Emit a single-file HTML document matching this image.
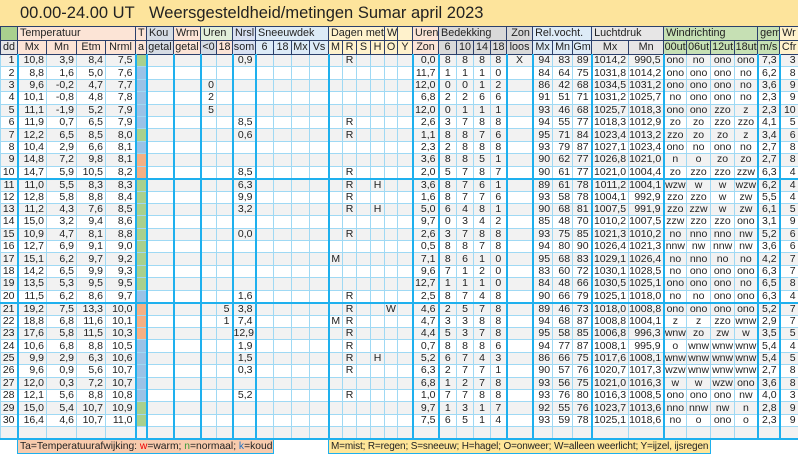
<!DOCTYPE html>
<html><head><meta charset="utf-8"><style>
body{margin:0;width:798px;height:455px;overflow:hidden;background:#fff;font-family:"Liberation Sans",Arial,sans-serif;}
.title{height:26px;background:#fde49c;position:relative;font-size:16.5px;color:#222;}
.title span{position:absolute;top:4px;}
table{border-collapse:collapse;table-layout:fixed;width:798px;font-size:10.5px;color:#222;}
td{padding:0 2px 0 0;overflow:hidden;white-space:nowrap;line-height:11px;text-align:right;border:1px solid #9fd9f4;}
thead tr{height:14px;}
thead td{border:1px solid #2b3f6b;text-align:center;padding:0;font-size:10.8px;}
thead tr.h1 td{text-align:left;padding-left:2px;}
tbody tr{height:12.4px;}
tbody tr:nth-child(odd) td{background:#f2f2f2;}
tbody td:nth-child(n+16):nth-child(-n+21),tbody td:nth-child(n+23):nth-child(-n+27),tbody td:nth-child(n+33):nth-child(-n+36){text-align:center;padding:0;}
tbody td:nth-child(1),tbody td:nth-child(5),tbody td:nth-child(6),tbody td:nth-child(7),tbody td:nth-child(8),tbody td:nth-child(10),tbody td:nth-child(11),tbody td:nth-child(15),tbody td:nth-child(21),tbody td:nth-child(22),tbody td:nth-child(26),tbody td:nth-child(27),tbody td:nth-child(30),tbody td:nth-child(32),tbody td:nth-child(36),tbody td:nth-child(37),tbody td:nth-child(38){border-right:2px solid #1eb0ee;}
tbody tr.b td{border-bottom:2px solid #1eb0ee;}
tbody tr td.g{background:#a9d08e!important}
tbody tr td.bl{background:#9bc2e6!important}
tbody tr td.o{background:#f4b084!important}
.s{background:#fce4d6}.k{background:#d6dce4}.gr{background:#e2efda}.l{background:#d9e1f2}.sb{background:#ddebf7}.y{background:#fff2cc}.gy{background:#d9d9d9}.lg{background:#e7e6e6}.wg{background:#c6e0b4}.dg{background:#a9d08e}
tr.leg{height:14px}
tr.leg td{background:#fff!important;border:none;}
tr.leg td.ls{background:#f8cbad!important;text-align:left;padding-left:2px;border:1px solid #1eb0ee;overflow:hidden;font-size:10.3px}
tr.leg td.ly{background:#ffe699!important;text-align:left;padding-left:2px;border:1px solid #1eb0ee;overflow:hidden;font-size:10px;letter-spacing:-0.15px}
</style></head><body>
<div class="title"><span style="left:20px">00.00-24.00 UT</span><span style="left:149px">Weersgesteldheid/metingen Sumar april 2023</span></div>
<table>
<colgroup><col style="width:17px"><col style="width:29px"><col style="width:30px"><col style="width:29px"><col style="width:30px"><col style="width:11px"><col style="width:27px"><col style="width:27px"><col style="width:16px"><col style="width:16px"><col style="width:23px"><col style="width:18px"><col style="width:18px"><col style="width:18px"><col style="width:19px"><col style="width:14px"><col style="width:14px"><col style="width:14px"><col style="width:14px"><col style="width:13px"><col style="width:15px"><col style="width:26px"><col style="width:18px"><col style="width:17px"><col style="width:17px"><col style="width:16px"><col style="width:26px"><col style="width:20px"><col style="width:20px"><col style="width:19px"><col style="width:37px"><col style="width:35px"><col style="width:23px"><col style="width:24px"><col style="width:24px"><col style="width:23px"><col style="width:22px"><col style="width:19px"></colgroup>
<thead>
<tr class="h1"><td class="dg"></td><td class="s" colspan="4">Temperatuur</td><td class="s">T</td><td class="k">Kou</td><td class="s">Wrm</td><td class="gr" colspan="2">Uren</td><td class="l">Nrsl</td><td class="sb" colspan="4">Sneeuwdek</td><td class="y" colspan="4">Dagen met</td><td class="y">W</td><td class="y"></td><td class="s">Uren</td><td class="gy" colspan="4">Bedekking</td><td class="gy" style="text-align:center">Zon</td><td class="sb" colspan="3">Rel.vocht.</td><td class="lg" colspan="2">Luchtdruk</td><td class="wg" colspan="4">Windrichting</td><td class="wg">gem</td><td class="y">Wr</td></tr>
<tr><td class="lg">dd</td><td class="s">Mx</td><td class="s">Mn</td><td class="s">Etm</td><td class="s">Nrml</td><td class="s">a</td><td class="k">getal</td><td class="s">getal</td><td class="k">&lt;0</td><td class="s">18</td><td class="l">som</td><td class="sb">6</td><td class="sb">18</td><td class="sb">Mx</td><td class="sb">Vs</td><td class="y">M</td><td class="y">R</td><td class="y">S</td><td class="y">H</td><td class="y">O</td><td class="y">Y</td><td class="s">Zon</td><td class="gy">6</td><td class="gy">10</td><td class="gy">14</td><td class="gy">18</td><td class="gy">loos</td><td class="sb">Mx</td><td class="sb">Mn</td><td class="sb">Gm</td><td class="lg">Mx</td><td class="lg">Mn</td><td class="wg">00ut</td><td class="wg">06ut</td><td class="wg">12ut</td><td class="wg">18ut</td><td class="wg">m/s</td><td class="y">Cfr</td></tr>
</thead>
<tbody>
<tr><td>1</td><td>10,8</td><td>3,9</td><td>8,4</td><td>7,5</td><td class="g"></td><td></td><td></td><td></td><td></td><td>0,9</td><td></td><td></td><td></td><td></td><td></td><td>R</td><td></td><td></td><td></td><td></td><td>0,0</td><td>8</td><td>8</td><td>8</td><td>8</td><td>X</td><td>94</td><td>83</td><td>89</td><td>1014,2</td><td>990,5</td><td>ono</td><td>no</td><td>ono</td><td>ono</td><td>7,3</td><td>3</td></tr>
<tr><td>2</td><td>8,8</td><td>1,6</td><td>5,0</td><td>7,6</td><td class="bl"></td><td></td><td></td><td></td><td></td><td></td><td></td><td></td><td></td><td></td><td></td><td></td><td></td><td></td><td></td><td></td><td>11,7</td><td>1</td><td>1</td><td>1</td><td>0</td><td></td><td>84</td><td>64</td><td>75</td><td>1031,8</td><td>1014,2</td><td>ono</td><td>ono</td><td>ono</td><td>no</td><td>6,2</td><td>8</td></tr>
<tr><td>3</td><td>9,6</td><td>-0,2</td><td>4,7</td><td>7,7</td><td class="bl"></td><td></td><td></td><td>0</td><td></td><td></td><td></td><td></td><td></td><td></td><td></td><td></td><td></td><td></td><td></td><td></td><td>12,0</td><td>0</td><td>0</td><td>1</td><td>2</td><td></td><td>86</td><td>42</td><td>68</td><td>1034,5</td><td>1031,2</td><td>ono</td><td>ono</td><td>ono</td><td>no</td><td>3,6</td><td>9</td></tr>
<tr><td>4</td><td>10,1</td><td>-0,8</td><td>4,8</td><td>7,8</td><td class="bl"></td><td></td><td></td><td>2</td><td></td><td></td><td></td><td></td><td></td><td></td><td></td><td></td><td></td><td></td><td></td><td></td><td>6,8</td><td>2</td><td>2</td><td>6</td><td>6</td><td></td><td>91</td><td>51</td><td>71</td><td>1031,2</td><td>1025,7</td><td>no</td><td>ono</td><td>ono</td><td>no</td><td>2,3</td><td>9</td></tr>
<tr><td>5</td><td>11,1</td><td>-1,9</td><td>5,2</td><td>7,9</td><td class="bl"></td><td></td><td></td><td>5</td><td></td><td></td><td></td><td></td><td></td><td></td><td></td><td></td><td></td><td></td><td></td><td></td><td>12,0</td><td>0</td><td>1</td><td>1</td><td>1</td><td></td><td>93</td><td>46</td><td>68</td><td>1025,7</td><td>1018,3</td><td>ono</td><td>ono</td><td>zzo</td><td>z</td><td>2,3</td><td>10</td></tr>
<tr><td>6</td><td>11,9</td><td>0,7</td><td>6,5</td><td>7,9</td><td class="bl"></td><td></td><td></td><td></td><td></td><td>8,5</td><td></td><td></td><td></td><td></td><td></td><td>R</td><td></td><td></td><td></td><td></td><td>2,6</td><td>3</td><td>7</td><td>8</td><td>8</td><td></td><td>94</td><td>55</td><td>77</td><td>1018,3</td><td>1012,9</td><td>zo</td><td>zo</td><td>zzo</td><td>zzo</td><td>4,1</td><td>5</td></tr>
<tr><td>7</td><td>12,2</td><td>6,5</td><td>8,5</td><td>8,0</td><td class="g"></td><td></td><td></td><td></td><td></td><td>0,6</td><td></td><td></td><td></td><td></td><td></td><td>R</td><td></td><td></td><td></td><td></td><td>1,1</td><td>8</td><td>8</td><td>7</td><td>6</td><td></td><td>95</td><td>71</td><td>84</td><td>1023,4</td><td>1013,2</td><td>zzo</td><td>zo</td><td>zo</td><td>z</td><td>3,4</td><td>6</td></tr>
<tr><td>8</td><td>10,4</td><td>2,9</td><td>6,6</td><td>8,1</td><td class="bl"></td><td></td><td></td><td></td><td></td><td></td><td></td><td></td><td></td><td></td><td></td><td></td><td></td><td></td><td></td><td></td><td>2,3</td><td>2</td><td>8</td><td>8</td><td>8</td><td></td><td>93</td><td>79</td><td>87</td><td>1027,1</td><td>1023,4</td><td>ono</td><td>no</td><td>ono</td><td>no</td><td>2,7</td><td>8</td></tr>
<tr><td>9</td><td>14,8</td><td>7,2</td><td>9,8</td><td>8,1</td><td class="o"></td><td></td><td></td><td></td><td></td><td></td><td></td><td></td><td></td><td></td><td></td><td></td><td></td><td></td><td></td><td></td><td>3,6</td><td>8</td><td>8</td><td>5</td><td>1</td><td></td><td>90</td><td>62</td><td>77</td><td>1026,8</td><td>1021,0</td><td>n</td><td>o</td><td>zo</td><td>zo</td><td>2,7</td><td>8</td></tr>
<tr class="b"><td>10</td><td>14,7</td><td>5,9</td><td>10,5</td><td>8,2</td><td class="o"></td><td></td><td></td><td></td><td></td><td>8,5</td><td></td><td></td><td></td><td></td><td></td><td>R</td><td></td><td></td><td></td><td></td><td>2,0</td><td>5</td><td>7</td><td>8</td><td>7</td><td></td><td>90</td><td>61</td><td>77</td><td>1021,0</td><td>1004,4</td><td>zo</td><td>zzo</td><td>zzo</td><td>zzw</td><td>6,3</td><td>4</td></tr>
<tr><td>11</td><td>11,0</td><td>5,5</td><td>8,3</td><td>8,3</td><td class="g"></td><td></td><td></td><td></td><td></td><td>6,3</td><td></td><td></td><td></td><td></td><td></td><td>R</td><td></td><td>H</td><td></td><td></td><td>3,6</td><td>8</td><td>7</td><td>6</td><td>1</td><td></td><td>89</td><td>61</td><td>78</td><td>1011,2</td><td>1004,1</td><td>wzw</td><td>w</td><td>w</td><td>wzw</td><td>6,2</td><td>4</td></tr>
<tr><td>12</td><td>12,8</td><td>5,8</td><td>8,8</td><td>8,4</td><td class="g"></td><td></td><td></td><td></td><td></td><td>9,9</td><td></td><td></td><td></td><td></td><td></td><td>R</td><td></td><td></td><td></td><td></td><td>1,6</td><td>8</td><td>7</td><td>7</td><td>6</td><td></td><td>93</td><td>58</td><td>78</td><td>1004,1</td><td>992,9</td><td>zzo</td><td>zzo</td><td>w</td><td>zw</td><td>5,5</td><td>4</td></tr>
<tr><td>13</td><td>11,2</td><td>4,3</td><td>7,6</td><td>8,5</td><td class="g"></td><td></td><td></td><td></td><td></td><td>3,2</td><td></td><td></td><td></td><td></td><td></td><td>R</td><td></td><td>H</td><td></td><td></td><td>5,0</td><td>6</td><td>4</td><td>8</td><td>1</td><td></td><td>90</td><td>68</td><td>81</td><td>1007,5</td><td>991,9</td><td>zzo</td><td>zzw</td><td>w</td><td>zw</td><td>6,1</td><td>5</td></tr>
<tr><td>14</td><td>15,0</td><td>3,2</td><td>9,4</td><td>8,6</td><td class="g"></td><td></td><td></td><td></td><td></td><td></td><td></td><td></td><td></td><td></td><td></td><td></td><td></td><td></td><td></td><td></td><td>9,7</td><td>0</td><td>3</td><td>4</td><td>2</td><td></td><td>85</td><td>48</td><td>70</td><td>1010,2</td><td>1007,5</td><td>zzw</td><td>zzo</td><td>zzo</td><td>ono</td><td>3,1</td><td>9</td></tr>
<tr><td>15</td><td>10,9</td><td>4,7</td><td>8,1</td><td>8,8</td><td class="g"></td><td></td><td></td><td></td><td></td><td>0,0</td><td></td><td></td><td></td><td></td><td></td><td>R</td><td></td><td></td><td></td><td></td><td>2,6</td><td>3</td><td>7</td><td>8</td><td>8</td><td></td><td>93</td><td>75</td><td>85</td><td>1021,3</td><td>1010,2</td><td>no</td><td>nno</td><td>nno</td><td>nw</td><td>5,2</td><td>6</td></tr>
<tr><td>16</td><td>12,7</td><td>6,9</td><td>9,1</td><td>9,0</td><td class="g"></td><td></td><td></td><td></td><td></td><td></td><td></td><td></td><td></td><td></td><td></td><td></td><td></td><td></td><td></td><td></td><td>0,5</td><td>8</td><td>8</td><td>7</td><td>8</td><td></td><td>94</td><td>80</td><td>90</td><td>1026,4</td><td>1021,3</td><td>nnw</td><td>nw</td><td>nnw</td><td>nw</td><td>3,6</td><td>6</td></tr>
<tr><td>17</td><td>15,1</td><td>6,2</td><td>9,7</td><td>9,2</td><td class="g"></td><td></td><td></td><td></td><td></td><td></td><td></td><td></td><td></td><td></td><td>M</td><td></td><td></td><td></td><td></td><td></td><td>7,1</td><td>8</td><td>6</td><td>1</td><td>0</td><td></td><td>95</td><td>68</td><td>83</td><td>1029,1</td><td>1026,4</td><td>no</td><td>nno</td><td>no</td><td>no</td><td>4,2</td><td>7</td></tr>
<tr><td>18</td><td>14,2</td><td>6,5</td><td>9,9</td><td>9,3</td><td class="g"></td><td></td><td></td><td></td><td></td><td></td><td></td><td></td><td></td><td></td><td></td><td></td><td></td><td></td><td></td><td></td><td>9,6</td><td>7</td><td>1</td><td>2</td><td>0</td><td></td><td>83</td><td>60</td><td>72</td><td>1030,1</td><td>1028,5</td><td>no</td><td>ono</td><td>ono</td><td>ono</td><td>6,3</td><td>7</td></tr>
<tr><td>19</td><td>13,5</td><td>5,3</td><td>9,5</td><td>9,5</td><td class="g"></td><td></td><td></td><td></td><td></td><td></td><td></td><td></td><td></td><td></td><td></td><td></td><td></td><td></td><td></td><td></td><td>12,7</td><td>1</td><td>1</td><td>1</td><td>0</td><td></td><td>84</td><td>48</td><td>66</td><td>1030,5</td><td>1025,1</td><td>ono</td><td>ono</td><td>ono</td><td>no</td><td>6,5</td><td>8</td></tr>
<tr class="b"><td>20</td><td>11,5</td><td>6,2</td><td>8,6</td><td>9,7</td><td class="bl"></td><td></td><td></td><td></td><td></td><td>1,6</td><td></td><td></td><td></td><td></td><td></td><td>R</td><td></td><td></td><td></td><td></td><td>2,5</td><td>8</td><td>7</td><td>4</td><td>8</td><td></td><td>90</td><td>66</td><td>79</td><td>1025,1</td><td>1018,0</td><td>no</td><td>no</td><td>ono</td><td>ono</td><td>6,3</td><td>4</td></tr>
<tr><td>21</td><td>19,2</td><td>7,5</td><td>13,3</td><td>10,0</td><td class="o"></td><td></td><td></td><td></td><td>5</td><td>3,8</td><td></td><td></td><td></td><td></td><td></td><td>R</td><td></td><td></td><td>W</td><td></td><td>4,6</td><td>2</td><td>5</td><td>7</td><td>8</td><td></td><td>89</td><td>46</td><td>73</td><td>1018,0</td><td>1008,8</td><td>ono</td><td>ono</td><td>ono</td><td>ono</td><td>5,2</td><td>7</td></tr>
<tr><td>22</td><td>18,8</td><td>6,8</td><td>11,6</td><td>10,1</td><td class="o"></td><td></td><td></td><td></td><td>1</td><td>7,4</td><td></td><td></td><td></td><td></td><td>M</td><td>R</td><td></td><td></td><td></td><td></td><td>4,7</td><td>3</td><td>3</td><td>8</td><td>8</td><td></td><td>94</td><td>68</td><td>87</td><td>1008,8</td><td>1004,1</td><td>z</td><td>z</td><td>zzo</td><td>wnw</td><td>2,9</td><td>7</td></tr>
<tr><td>23</td><td>17,6</td><td>5,8</td><td>11,5</td><td>10,3</td><td class="o"></td><td></td><td></td><td></td><td></td><td>12,9</td><td></td><td></td><td></td><td></td><td></td><td>R</td><td></td><td></td><td></td><td></td><td>4,4</td><td>5</td><td>3</td><td>7</td><td>8</td><td></td><td>95</td><td>58</td><td>85</td><td>1006,8</td><td>996,3</td><td>wnw</td><td>zo</td><td>zw</td><td>w</td><td>3,5</td><td>5</td></tr>
<tr><td>24</td><td>10,6</td><td>6,8</td><td>8,8</td><td>10,5</td><td class="bl"></td><td></td><td></td><td></td><td></td><td>1,9</td><td></td><td></td><td></td><td></td><td></td><td>R</td><td></td><td></td><td></td><td></td><td>0,7</td><td>8</td><td>8</td><td>8</td><td>6</td><td></td><td>94</td><td>77</td><td>87</td><td>1008,1</td><td>995,9</td><td>o</td><td>wnw</td><td>wnw</td><td>wnw</td><td>5,4</td><td>4</td></tr>
<tr><td>25</td><td>9,9</td><td>2,9</td><td>6,3</td><td>10,6</td><td class="bl"></td><td></td><td></td><td></td><td></td><td>1,5</td><td></td><td></td><td></td><td></td><td></td><td>R</td><td></td><td>H</td><td></td><td></td><td>5,2</td><td>6</td><td>7</td><td>4</td><td>3</td><td></td><td>86</td><td>66</td><td>75</td><td>1017,6</td><td>1008,1</td><td>wnw</td><td>wnw</td><td>wnw</td><td>wnw</td><td>5,4</td><td>5</td></tr>
<tr><td>26</td><td>9,6</td><td>0,9</td><td>5,6</td><td>10,7</td><td class="bl"></td><td></td><td></td><td></td><td></td><td>0,3</td><td></td><td></td><td></td><td></td><td></td><td>R</td><td></td><td></td><td></td><td></td><td>6,3</td><td>2</td><td>7</td><td>7</td><td>1</td><td></td><td>90</td><td>57</td><td>76</td><td>1020,7</td><td>1017,3</td><td>wzw</td><td>wnw</td><td>wnw</td><td>wnw</td><td>2,7</td><td>8</td></tr>
<tr><td>27</td><td>12,0</td><td>0,3</td><td>7,2</td><td>10,7</td><td class="bl"></td><td></td><td></td><td></td><td></td><td></td><td></td><td></td><td></td><td></td><td></td><td></td><td></td><td></td><td></td><td></td><td>6,8</td><td>1</td><td>2</td><td>7</td><td>8</td><td></td><td>93</td><td>56</td><td>75</td><td>1021,0</td><td>1016,3</td><td>w</td><td>w</td><td>wzw</td><td>ono</td><td>3,6</td><td>8</td></tr>
<tr><td>28</td><td>12,1</td><td>5,6</td><td>8,8</td><td>10,8</td><td class="bl"></td><td></td><td></td><td></td><td></td><td>5,2</td><td></td><td></td><td></td><td></td><td></td><td>R</td><td></td><td></td><td></td><td></td><td>1,0</td><td>7</td><td>7</td><td>8</td><td>8</td><td></td><td>93</td><td>76</td><td>80</td><td>1016,3</td><td>1008,5</td><td>ono</td><td>ono</td><td>ono</td><td>nw</td><td>4,0</td><td>3</td></tr>
<tr><td>29</td><td>15,0</td><td>5,4</td><td>10,7</td><td>10,9</td><td class="g"></td><td></td><td></td><td></td><td></td><td></td><td></td><td></td><td></td><td></td><td></td><td></td><td></td><td></td><td></td><td></td><td>9,7</td><td>1</td><td>3</td><td>1</td><td>7</td><td></td><td>92</td><td>55</td><td>76</td><td>1023,7</td><td>1013,6</td><td>nno</td><td>nnw</td><td>nw</td><td>n</td><td>2,8</td><td>9</td></tr>
<tr><td>30</td><td>16,4</td><td>4,6</td><td>10,7</td><td>11,0</td><td class="g"></td><td></td><td></td><td></td><td></td><td></td><td></td><td></td><td></td><td></td><td></td><td></td><td></td><td></td><td></td><td></td><td>7,5</td><td>6</td><td>5</td><td>1</td><td>4</td><td></td><td>93</td><td>59</td><td>78</td><td>1025,1</td><td>1018,6</td><td>no</td><td>o</td><td>ono</td><td>o</td><td>2,3</td><td>9</td></tr>
<tr class="b"><td></td><td></td><td></td><td></td><td></td><td></td><td></td><td></td><td></td><td></td><td></td><td></td><td></td><td></td><td></td><td></td><td></td><td></td><td></td><td></td><td></td><td></td><td></td><td></td><td></td><td></td><td></td><td></td><td></td><td></td><td></td><td></td><td></td><td></td><td></td><td></td><td></td><td></td></tr>
<tr class="leg"><td></td><td class="ls" colspan="11">Ta=Temperatuurafwijking: <span style="color:#e00">w</span>=warm; <span style="color:#3a9a3a">n</span>=normaal; <span style="color:#1f6fc0">k</span>=koud</td><td></td><td></td><td></td><td class="ly" colspan="19">M=mist; R=regen; S=sneeuw; H=hagel; O=onweer; W=alleen weerlicht; Y=ijzel, ijsregen</td><td></td><td></td><td></td><td></td></tr>
</tbody></table>
</body></html>
